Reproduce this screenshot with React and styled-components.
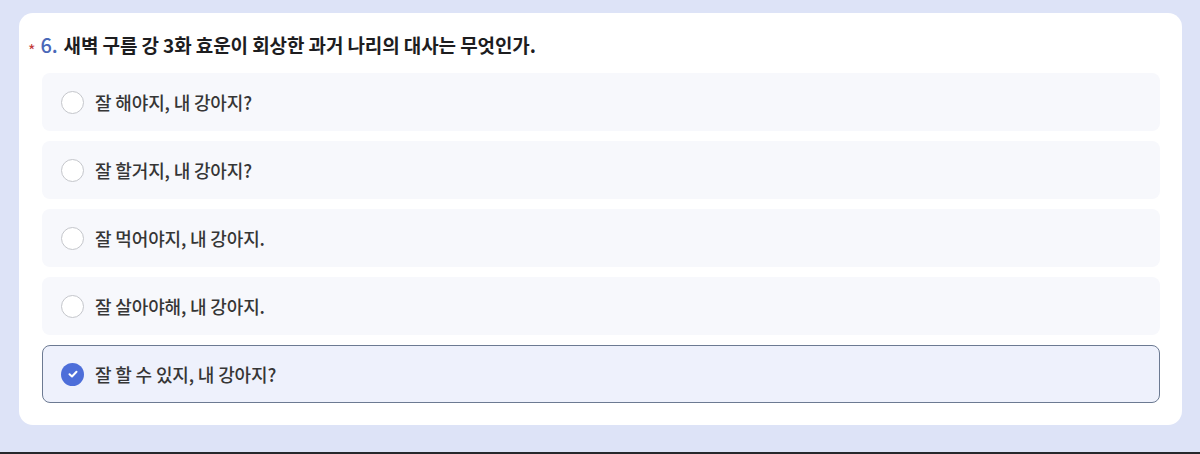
import React, { useState } from "react";
import styled, { createGlobalStyle } from "styled-components";

const GlobalStyle = createGlobalStyle`
  html, body {
    margin: 0;
    padding: 0;
    background: #dde3f7;
  }
  * { box-sizing: border-box; }
`;

const Page = styled.div`
  height: 452px;
  padding: 13px 18px 0 19px;
  background: #dde3f7;
  font-family: "Noto Sans CJK KR", "Noto Sans", sans-serif;
`;

const Divider = styled.div`
  height: 2px;
  background: #26282c;
`;

const Card = styled.section`
  background: #ffffff;
  border-radius: 14px;
  height: 412px;
  padding: 21px 22px 23px 23px;
`;

const Question = styled.h3`
  margin: 0 0 16px -14px;
  display: flex;
  align-items: baseline;
  font-size: 19px;
  line-height: 22px;
  font-weight: 700;
  color: #1d1d1f;
  letter-spacing: -0.1px;

  .star {
    color: #c23b3b;
    font-size: 16px;
    font-weight: 400;
    margin-right: 5px;
    transform: translateY(4px);
  }
  .num {
    color: #4a68b8;
    font-weight: 500;
    font-size: 20px;
    margin-right: 6px;
  }
`;

const Options = styled.div`
  display: flex;
  flex-direction: column;
  gap: 10px;
`;

const Option = styled.label`
  display: flex;
  align-items: center;
  gap: 11px;
  height: 58px;
  padding: 0 18px;
  border-radius: 8px;
  cursor: pointer;
  background: ${(p) => (p.$checked ? "#eef1fc" : "#f7f8fc")};
  border: 1px solid ${(p) => (p.$checked ? "#6c7a92" : "transparent")};
  font-size: 18px;
  font-weight: 500;
  color: #363636;
  letter-spacing: -0.15px;
`;

const Radio = styled.span`
  width: 23px;
  height: 23px;
  border-radius: 50%;
  flex: none;
  display: flex;
  align-items: center;
  justify-content: center;
  background: ${(p) => (p.$checked ? "#4d6ed9" : "#ffffff")};
  border: ${(p) => (p.$checked ? "none" : "1.5px solid #c4c6cb")};
`;

const choices = [
  "잘 해야지, 내 강아지?",
  "잘 할거지, 내 강아지?",
  "잘 먹어야지, 내 강아지.",
  "잘 살아야해, 내 강아지.",
  "잘 할 수 있지, 내 강아지?",
];

export default function App() {
  const [selected, setSelected] = useState(4);
  return (
    <>
      <GlobalStyle />
      <Page>
        <Card>
          <Question>
            <span className="star">*</span>
            <span className="num">6.</span>
            새벽 구름 강 3화 효운이 회상한 과거 나리의 대사는 무엇인가.
          </Question>
          <Options>
            {choices.map((c, i) => (
              <Option key={i} $checked={selected === i} onClick={() => setSelected(i)}>
                <Radio $checked={selected === i}>
                  {selected === i && (
                    <svg width="12" height="12" viewBox="0 0 12 12">
                      <path d="M2.5 6.2 L5 8.5 L9.5 3.8" fill="none" stroke="#fff" strokeWidth="2" strokeLinecap="round" strokeLinejoin="round" />
                    </svg>
                  )}
                </Radio>
                {c}
              </Option>
            ))}
          </Options>
        </Card>
      </Page>
      <Divider />
    </>
  );
}
